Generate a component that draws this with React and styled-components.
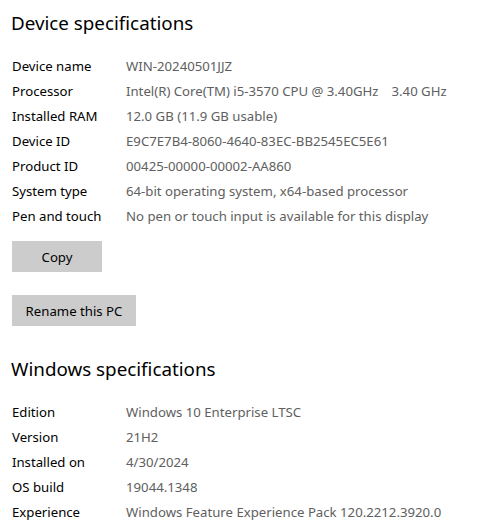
import React from "react";
import styled, { createGlobalStyle } from "styled-components";

const Global = createGlobalStyle`
  html, body { margin: 0; padding: 0; background: #fff; }
  body { font-family: "Noto Sans", "Open Sans", sans-serif; color: #000; }
`;

const Page = styled.div`
  padding: 8px 12px 0 12px;
  display: flex;
  flex-direction: column;
`;

const Heading = styled.h2`
  margin: ${(p) => p.$top || 0}px 0 0 -1px;
  font-size: 18.8px;
  font-weight: 400;
  line-height: 30px;
  color: #000;
`;

const SpecList = styled.dl`
  margin: ${(p) => p.$top}px 0 0 0;
  display: grid;
  grid-template-columns: 114px 1fr;
  grid-auto-rows: 25px;
  align-items: center;
`;

const Label = styled.dt`
  font-size: 13.2px;
  color: #000;
  white-space: nowrap;
`;

const Value = styled.dd`
  margin: 0;
  font-size: 13.2px;
  color: #606060;
  white-space: pre;
`;

const Gap = styled.span`
  display: inline-block;
  width: 13px;
`;

const Button = styled.button`
  align-self: flex-start;
  margin-top: ${(p) => p.$top}px;
  width: ${(p) => p.$w}px;
  height: 31px;
  border: none;
  background: #cccccc;
  font-family: inherit;
  font-size: 13.2px;
  color: #000;
  padding: 0;
`;

const device = [
  ["Device name", "WIN-20240501JJZ"],
  ["Processor", <>Intel(R) Core(TM) i5-3570 CPU @ 3.40GHz<Gap />3.40 GHz</>],
  ["Installed RAM", "12.0 GB (11.9 GB usable)"],
  ["Device ID", "E9C7E7B4-8060-4640-83EC-BB2545EC5E61"],
  ["Product ID", "00425-00000-00002-AA860"],
  ["System type", "64-bit operating system, x64-based processor"],
  ["Pen and touch", "No pen or touch input is available for this display"],
];

const windows = [
  ["Edition", "Windows 10 Enterprise LTSC"],
  ["Version", "21H2"],
  ["Installed on", "4/30/2024"],
  ["OS build", "19044.1348"],
  ["Experience", "Windows Feature Experience Pack 120.2212.3920.0"],
];

const Specs = ({ rows, top }) => (
  <SpecList $top={top}>
    {rows.map(([k, v]) => (
      <React.Fragment key={k}>
        <Label>{k}</Label>
        <Value>{v}</Value>
      </React.Fragment>
    ))}
  </SpecList>
);

export default function App() {
  return (
    <Page>
      <Global />
      <Heading>Device specifications</Heading>
      <Specs rows={device} top={15} />
      <Button $top={13} $w={90}>Copy</Button>
      <Button $top={23} $w={124}>Rename this PC</Button>
      <Heading $top={28}>Windows specifications</Heading>
      <Specs rows={windows} top={15} />
    </Page>
  );
}
